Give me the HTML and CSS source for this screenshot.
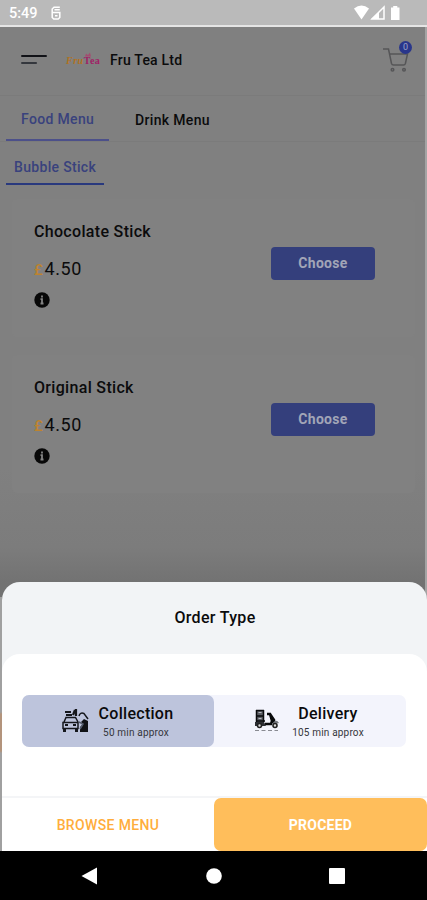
FILE: index.html
```html
<!DOCTYPE html>
<html lang="en">
<head>
<meta charset="utf-8">
<title>Fru Tea Ltd</title>
<link rel="stylesheet" href="styles.css">
</head>
<body>
<div class="phone">
  <div class="status">
    <span class="time">5:49</span>
    <svg class="status-app" width="10" height="14" viewBox="0 0 10 14" fill="none" stroke="#fff" stroke-width="1.500"><path d="M8.800 1.200H3L1.200 3v3.500h7.600v5L7.200 13H2.800L1.200 11.500V6.500M3.500 3.800h5.300M4 9.700h2.500"/></svg>
    <svg class="status-icons" width="48" height="16" viewBox="0 0 48 16"><path d="M1 3.5Q8.5-2.5 16 3.5L8.5 14.5Z" fill="#fff"/><path d="M31 2v12H19Z" fill="none" stroke="#fff" stroke-width="1.500"/><path d="M26 7v7H18Z" fill="#fff"/><path d="M38 2.500h2.200V1h4.100v1.500h2.200v12.500h-8.500Z" fill="#fff"/></svg>
  </div>
  <main class="app">
    <header class="header">
      <svg class="burger" width="26" height="12" viewBox="0 0 26 12" stroke-linecap="round" stroke-width="2.200"><path d="M1.100 2H24.900" stroke="#111217"/><path d="M1.100 9H15" stroke="#34373d"/></svg>
      <div class="logo"><i>Fru</i><b>Tea</b>
        <svg class="logo-mark" width="8" height="5" viewBox="0 0 8 5"><path d="M1 4.500 2 1.500 4 3 6 .500 7 4.500Z" fill="#a34d70"/></svg>
      </div>
      <h1>Fru Tea Ltd</h1>
      <div class="cart">
        <svg width="26" height="26" viewBox="0 0 26 26" fill="none" stroke="#555557" stroke-width="1.500"><path d="M0 2H5.500L8.500 16.500Q9 18 10.500 18H20.500Q22 18 22.400 16.500L24.500 7H7"/><circle cx="9.500" cy="22.800" r="1.300"/><circle cx="21" cy="22.800" r="1.300"/></svg>
        <span class="badge">0</span>
      </div>
    </header>
    <nav class="tabs">
      <span class="tab tab-active">Food Menu</span>
      <span class="tab">Drink Menu</span>
    </nav>
    <nav class="subtabs"><span class="subtab">Bubble Stick</span></nav>
    <section class="items">
      <article class="item">
        <div><h2>Chocolate Stick</h2><p class="price"><span>£</span>4.50</p>
        <svg class="info" width="16" height="16" viewBox="0 0 16 16"><circle cx="8" cy="8" r="7.700" fill="#080808"/><path d="M8 3.500v2M6.500 7.200H8v4.300M6.500 11.500h3" stroke="#858585" stroke-width="1.800" fill="none"/></svg></div>
        <button class="choose">Choose</button>
      </article>
      <article class="item">
        <div><h2>Original Stick</h2><p class="price"><span>£</span>4.50</p>
        <svg class="info" width="16" height="16" viewBox="0 0 16 16"><circle cx="8" cy="8" r="7.700" fill="#080808"/><path d="M8 3.500v2M6.500 7.200H8v4.300M6.500 11.500h3" stroke="#858585" stroke-width="1.800" fill="none"/></svg></div>
        <button class="choose">Choose</button>
      </article>
    </section>
    <div class="page-edge"></div>
    <section class="sheet">
      <h2 class="sheet-title">Order Type</h2>
      <div class="sheet-body">
        <div class="options">
          <div class="option selected">
            <svg width="28" height="26" viewBox="0 0 28 26"><g fill="none" stroke="#15171c" stroke-width="1.500"><path d="M3 14 5 9.500h9.500L17 14M2 14.500h15v6H2Z"/><path d="M3.500 20v4M15.500 20v4" stroke-width="3"/><path d="M4 17h3M12 17h3" stroke-width="2"/><path d="M4 4h6M5 7h6" stroke-width="2"/><path d="M14 2l-2 5M15 1v7" stroke-width="2.200"/><path d="M18 8q1-4 5-2.500l4 5.500"/></g><path d="M20 14l3-3 4 2v11h-8v-5l3-3Z" fill="#101216"/><path d="M18 14l4 2-3 5" fill="none" stroke="#555d6d" stroke-width="1.500"/></svg>
            <div class="label"><strong>Collection</strong><small>50 min approx</small></div>
          </div>
          <div class="option delivery">
            <svg width="26" height="24" viewBox="0 0 26 24"><path d="M2 1h8v12H2Z" fill="#5b5d62"/><path d="M2 1.500h8M2 7h8M2 12h9M2.500 1v12M9.500 1v12" stroke="#090a0c" stroke-width="1.500"/><path d="M4.500 3.500h3M4.500 9.500h3" stroke="#b9bbc2" stroke-width="1.200"/><path d="M11 15h6l1-3-2-7h-3M16 5l4 6v3" fill="none" stroke="#08090b" stroke-width="2.500"/><path d="M1 13h9l2 4H1Z" fill="#2c2e33"/><path d="M18 15q4-6 7-1l-4 1Z" fill="#777a80"/><g fill="#ddd" stroke="#222" stroke-width="1.600"><circle cx="5.500" cy="16.500" r="2"/><circle cx="21" cy="16.500" r="2"/></g><path d="M1 21.500h23" stroke="#898b92" stroke-dasharray="4 2.500"/></svg>
            <div class="label"><strong>Delivery</strong><small>105 min approx</small></div>
          </div>
        </div>
        <div class="actions">
          <button class="browse">BROWSE MENU</button>
          <button class="proceed">PROCEED</button>
        </div>
      </div>
    </section>
  </main>
  <footer class="sysnav">
    <svg width="17" height="18" viewBox="0 0 17 18"><path d="M.500 9 16 .500v17Z" fill="#fff"/></svg>
    <svg width="16" height="16" viewBox="0 0 16 16"><circle cx="8" cy="8" r="7.800" fill="#fff"/></svg>
    <svg width="16" height="16" viewBox="0 0 16 16"><rect width="16" height="16" rx="1" fill="#fff"/></svg>
  </footer>
</div>
</body>
</html>
```
FILE: styles.css
```css
* { box-sizing: border-box; }
body { margin: 0; font-family: Roboto, "Liberation Sans", sans-serif; color: #0b0b0c; }
h1, h2, p { margin: 0; font-weight: 500; }
button { border: 0; padding: 0; font: inherit; }
svg { display: block; flex: none; }
.phone { width: 427px; height: 900px; display: flex; flex-direction: column; overflow: hidden; }
.status { height: 27px; flex: none; background: #bababa; border-bottom: 2px solid #e5e5e5; display: flex; align-items: center; padding: 1px 26px 0 9px; color: #fff; }
.time { font-size: 14.500px; font-weight: 500; width: 42px; }
.status-icons { margin-left: auto; }
.app { position: relative; flex: 1; background: linear-gradient(#808080 0 440px, #7c7c7c 520px, #727272 556px); border-right: 2px solid #a4a4a4; }
.header { height: 69px; display: flex; align-items: center; padding: 0 16px 3px 21px; border-bottom: 1px solid #7b7b7b; }
.logo { position: relative; width: 36px; margin: 2px 8px 0 19px; font: bold 10px/10px "Liberation Serif", serif; display: flex; color: #b0721f; letter-spacing: .5px; }
.logo b { color: #a01f66; }
.logo-mark { position: absolute; left: 18px; top: -4px; }
h1 { font-size: 14px; letter-spacing: .22px; }
.cart { position: relative; margin-left: auto; width: 26px; }
.badge { position: absolute; left: 16px; top: -6px; width: 13px; height: 13px; border-radius: 50%; background: #29368b; color: #9ba1c7; font-size: 9px; line-height: 13px; text-align: center; }
.tabs { height: 46px; display: flex; border-bottom: 1px solid #7b7b7b; padding-left: 6px; }
.tab { height: 45px; padding: 15px 15px 0; font-size: 14px; line-height: 18px; font-weight: 500; margin-right: 11px; letter-spacing: .34px; white-space: nowrap; }
.tab-active { width: 103px; color: #39427d; padding-top: 14px; border-bottom: 2px solid #4c508a; }
.subtabs { height: 44px; padding-left: 6px; }
.subtab { display: block; width: 98px; height: 43px; border-bottom: 2px solid #29397e; color: #39427d; font-size: 14px; font-weight: 500; line-height: 18px; padding: 16px 0 0 8px; letter-spacing: .32px; white-space: nowrap; }
.items { display: flex; flex-direction: column; gap: 18px; padding: 13px 10px 0 12px; }
.item { height: 138px; border-radius: 5px; background: #818181; display: flex; justify-content: space-between; padding: 23px 40px 0 22px; }
.item h2 { font-size: 16px; line-height: 20px; letter-spacing: .32px; }
.price { display: flex; align-items: baseline; margin-top: 15px; font-size: 18px; line-height: 24px; font-weight: 400; letter-spacing: .6px; }
.price span { width: 10.500px; color: #bd832e; font-size: 15px; font-weight: 500; }
.info { margin-top: 10px; }
.choose { width: 104px; height: 33px; margin-top: 24.500px; border-radius: 4px; background: #343f7c; color: #a2a5b7; font-size: 14px; font-weight: 700; letter-spacing: .3px; }
.page-edge { position: absolute; left: 0; top: 570px; bottom: 0; width: 2px; background: linear-gradient(#a0a0a0 0 115px, #b3947c 117px 154px, #a0a0a0 156px); }
.sheet { position: absolute; left: 2px; right: -2px; top: 555px; bottom: 0; border-radius: 18px 18px 0 0; background: #f2f4f6; display: flex; flex-direction: column; overflow: hidden; }
.sheet-title { height: 72px; line-height: 72px; text-align: center; font-size: 16px; letter-spacing: .32px; padding-left: 1px; }
.sheet-body { flex: 1; background: #fff; border-radius: 18px 18px 0 0; display: flex; flex-direction: column; justify-content: space-between; padding-top: 41px; }
.options { display: flex; margin-left: 20px; width: 384px; height: 52px; background: #f3f4fc; border-radius: 7px; }
.option { width: 192px; display: flex; align-items: center; border-radius: 7px; padding-left: 39px; }
.delivery { padding-left: 40px; }
.selected { background: #bdc4dc; }
.label { display: flex; flex-direction: column; align-items: center; width: 76px; margin-left: 9px; padding-top: 3px; }
.label strong { font-size: 16px; line-height: 20px; font-weight: 500; letter-spacing: .28px; }
.label small { font-size: 10px; line-height: 17px; white-space: nowrap; color: #34363b; letter-spacing: .18px; }
.delivery .label { margin-left: 10px; }
.actions { height: 55px; border-top: 2px solid #f4f5f7; display: flex; }
.browse { width: 212px; background: #fff; color: #ffad3c; font-size: 14px; font-weight: 500; letter-spacing: .36px; }
.proceed { flex: 1; background: #ffbe5b; border-radius: 7px; color: #fff; font-size: 14px; font-weight: 700; letter-spacing: .25px; }
.sysnav { height: 49px; flex: none; background: #000; display: flex; align-items: center; justify-content: space-between; padding: 0 82px 0 81px; }
```
